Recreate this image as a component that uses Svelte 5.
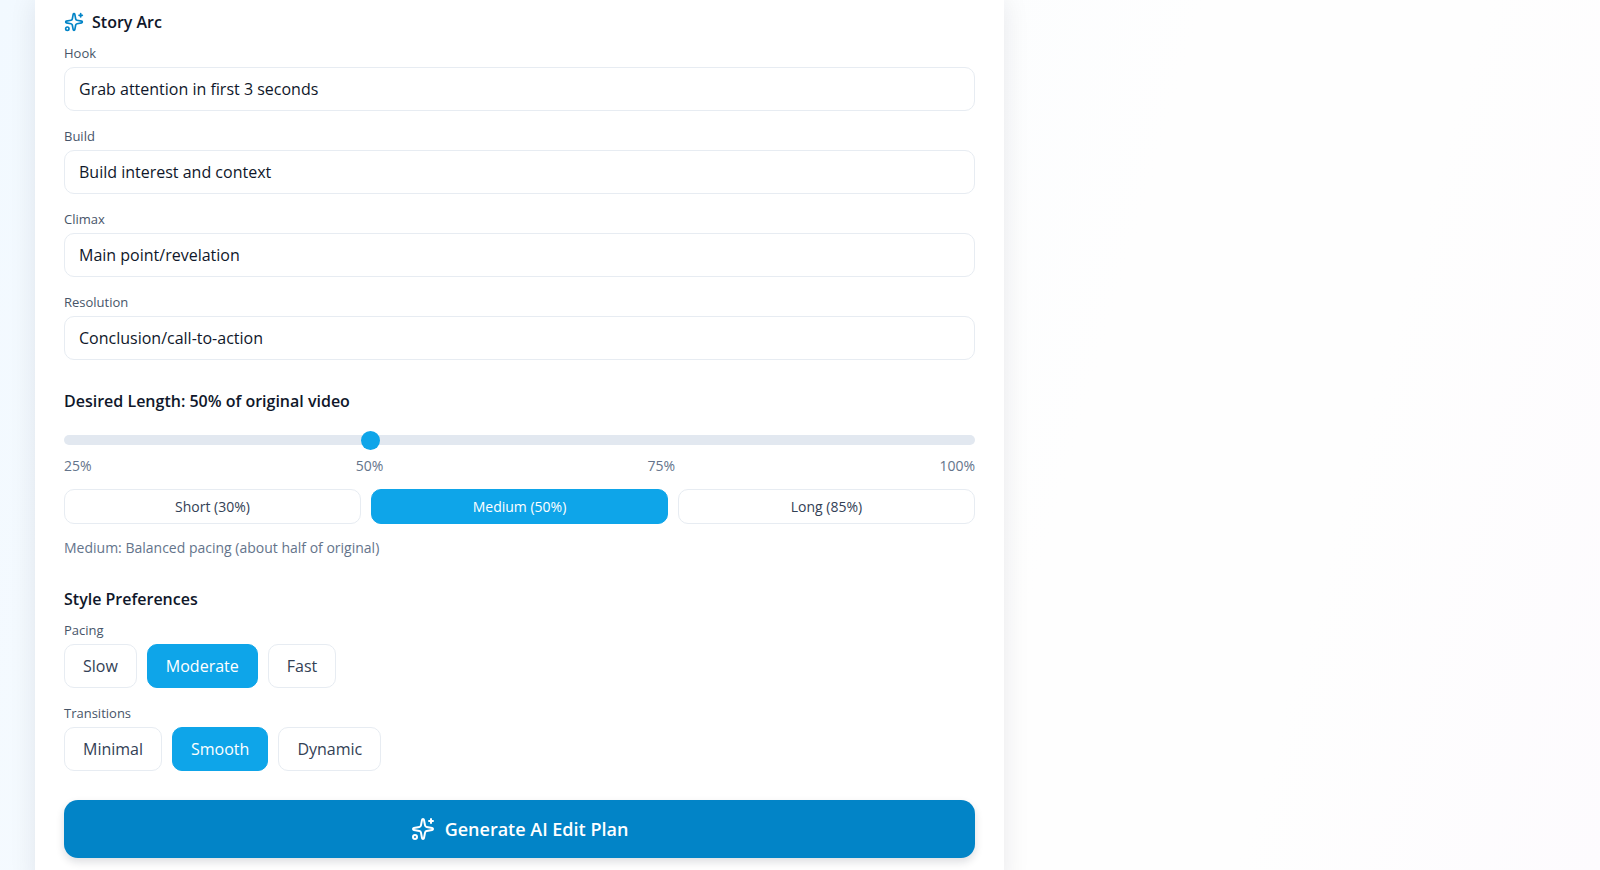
<script lang="ts">
  interface Beat {
    id: string;
    label: string;
    value: string;
  }

  interface Preset {
    name: string;
    percent: number;
    hint: string;
  }

  let beats: Beat[] = $state([
    { id: 'hook', label: 'Hook', value: 'Grab attention in first 3 seconds' },
    { id: 'build', label: 'Build', value: 'Build interest and context' },
    { id: 'climax', label: 'Climax', value: 'Main point/revelation' },
    { id: 'resolution', label: 'Resolution', value: 'Conclusion/call-to-action' },
  ]);

  const presets: Preset[] = [
    { name: 'Short', percent: 30, hint: 'Quick highlights only' },
    { name: 'Medium', percent: 50, hint: 'Balanced pacing (about half of original)' },
    { name: 'Long', percent: 85, hint: 'Keeps most of the original' },
  ];
  const ticks = [25, 50, 75, 100];
  const pacings = ['Slow', 'Moderate', 'Fast'];
  const transitionStyles = ['Minimal', 'Smooth', 'Dynamic'];

  let length = $state(50);
  let pacing = $state('Moderate');
  let transition = $state('Smooth');

  let activePreset = $derived(
    length < 40 ? presets[0] : length < 70 ? presets[1] : presets[2],
  );
</script>

{#snippet sparkles(size: number)}
  <svg
    width={size}
    height={size}
    viewBox="0 0 24 24"
    fill="none"
    stroke="currentColor"
    stroke-width="2"
    stroke-linecap="round"
    stroke-linejoin="round"
    aria-hidden="true"
  >
    <path
      d="M11.017 2.814a1 1 0 0 1 1.966 0l1.051 5.558a2 2 0 0 0 1.594 1.594l5.558 1.051a1 1 0 0 1 0 1.966l-5.558 1.051a2 2 0 0 0-1.594 1.594l-1.051 5.558a1 1 0 0 1-1.966 0l-1.051-5.558a2 2 0 0 0-1.594-1.594l-5.558-1.051a1 1 0 0 1 0-1.966l5.558-1.051a2 2 0 0 0 1.594-1.594z"
    />
    <path d="M20 2v4" />
    <path d="M22 4h-4" />
    <circle cx="4" cy="20" r="2" />
  </svg>
{/snippet}

{#snippet choices(id: string, label: string, options: string[], current: string, pick: (v: string) => void)}
  <div class="field" role="group" aria-labelledby={id}>
    <span class="label" {id}>{label}</span>
    <div class="choices">
      {#each options as option}
        <button
          type="button"
          class="choice"
          class:active={option === current}
          aria-pressed={option === current}
          onclick={() => pick(option)}
        >
          {option}
        </button>
      {/each}
    </div>
  </div>
{/snippet}

<main class="page">
  <form class="card" onsubmit={(e) => e.preventDefault()}>
    <section>
      <h3 class="with-icon">
        <span class="icon">{@render sparkles(20)}</span>
        Story Arc
      </h3>
      <div class="fields">
        {#each beats as beat (beat.id)}
          <div class="field">
            <label class="label" for={beat.id}>{beat.label}</label>
            <input class="text" id={beat.id} type="text" bind:value={beat.value} />
          </div>
        {/each}
      </div>
    </section>

    <section>
      <h3><label for="length">Desired Length: {length}% of original video</label></h3>
      <input class="slider" id="length" type="range" min="25" max="100" bind:value={length} />
      <div class="ticks">
        {#each ticks as tick}
          <span>{tick}%</span>
        {/each}
      </div>
      <div class="presets">
        {#each presets as preset}
          <button
            type="button"
            class="preset"
            class:active={preset === activePreset}
            onclick={() => (length = preset.percent)}
          >
            {preset.name} ({preset.percent}%)
          </button>
        {/each}
      </div>
      <p class="hint">{activePreset.name}: {activePreset.hint}</p>
    </section>

    <section>
      <h3>Style Preferences</h3>
      <div class="fields">
        {@render choices('pacing', 'Pacing', pacings, pacing, (v) => (pacing = v))}
        {@render choices('transitions', 'Transitions', transitionStyles, transition, (v) => (transition = v))}
      </div>
    </section>

    <button type="submit" class="generate">
      {@render sparkles(24)}
      Generate AI Edit Plan
    </button>
  </form>
</main>

<style>
  :global(body) {
    margin: 0;
  }
  .page {
    box-sizing: border-box;
    min-height: 100vh;
    padding: 0 35px;
    display: grid;
    grid-template-columns: 19fr 11fr;
    overflow: hidden;
    background: linear-gradient(106deg, #f2f9ff 0%, #fefefe 65%, #fefefe 80%, #fdfbfe 100%);
    color: #0f172a;
    font-family: 'Segoe UI', 'Open Sans', 'Noto Sans', sans-serif;
    font-size: 16px;
    line-height: 24px;
  }
  .card {
    box-sizing: border-box;
    min-width: 0;
    padding: 10px 29px 29px;
    display: flex;
    flex-direction: column;
    gap: 29px;
    background: #ffffff;
    box-shadow: 0 0 26px rgba(15, 23, 42, 0.09);
  }
  h3 {
    margin: 0 0 9px;
    font-size: 16px;
    font-weight: 600;
    line-height: 24px;
  }
  .with-icon {
    display: flex;
    align-items: center;
    gap: 8px;
  }
  .icon {
    display: flex;
    color: #0284c7;
  }
  .fields {
    display: flex;
    flex-direction: column;
    gap: 15px;
  }
  .field {
    display: flex;
    flex-direction: column;
    gap: 4px;
  }
  .label {
    font-size: 13px;
    line-height: 20px;
    color: #475569;
  }
  .text {
    box-sizing: border-box;
    width: 100%;
    height: 44px;
    padding: 0 14px;
    border: 1px solid #e7ecf2;
    border-radius: 10px;
    background: #ffffff;
    color: inherit;
    font: inherit;
  }

  .slider {
    appearance: none;
    -webkit-appearance: none;
    display: block;
    width: 100%;
    height: 10px;
    margin: 22px 0 11px;
    border-radius: 5px;
    background: #e2e8f0;
    cursor: pointer;
  }
  .slider::-webkit-slider-thumb {
    -webkit-appearance: none;
    width: 19px;
    height: 19px;
    border-radius: 50%;
    background: #0ea5e9;
  }
  .ticks {
    display: flex;
    justify-content: space-between;
    font-size: 14px;
    line-height: 20px;
    color: #64748b;
  }
  .presets {
    display: grid;
    grid-template-columns: repeat(3, 1fr);
    gap: 10px;
    margin-top: 13px;
  }
  .preset,
  .choice {
    border: 1px solid #e7ecf2;
    border-radius: 10px;
    background: #ffffff;
    color: #334155;
    font: inherit;
    cursor: pointer;
  }
  .preset {
    height: 35px;
    padding: 0 12px;
    font-size: 14px;
    line-height: 20px;
  }
  .choices {
    display: flex;
    gap: 10px;
  }
  .choice {
    height: 44px;
    padding: 0 18px;
  }
  .active {
    border-color: #0ea5e9;
    background: #0ea5e9;
    color: #ffffff;
  }
  .hint {
    margin: 14px 0 0;
    font-size: 14px;
    line-height: 20px;
    color: #64748b;
  }

  .generate {
    display: flex;
    align-items: center;
    justify-content: center;
    gap: 10px;
    height: 58px;
    border: 0;
    border-radius: 14px;
    background: #0284c7;
    color: #ffffff;
    font: inherit;
    font-size: 18px;
    font-weight: 600;
    box-shadow: 0 4px 8px rgba(15, 23, 42, 0.14);
    cursor: pointer;
  }
</style>
